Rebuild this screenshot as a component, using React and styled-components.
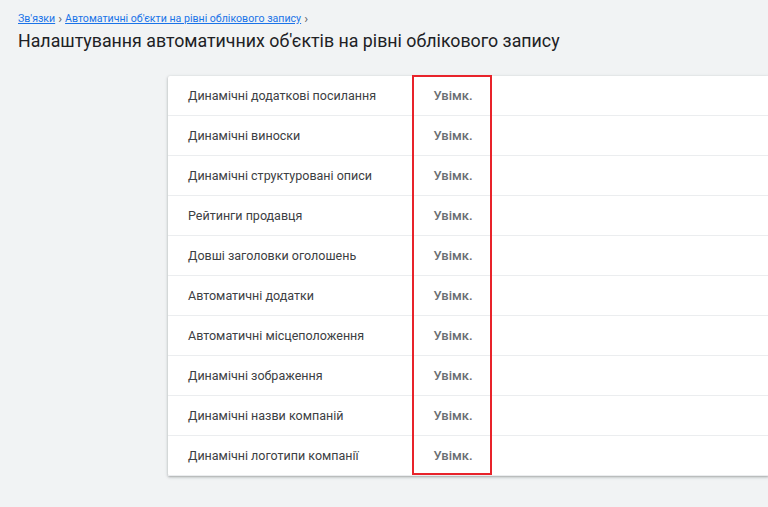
import React from "react"
import styled, { createGlobalStyle } from "styled-components"

const GlobalStyle = createGlobalStyle`
  html, body {
    margin: 0;
    padding: 0;
    background: #f1f3f4;
    font-family: Roboto, "Noto Sans", Arial, sans-serif;
    overflow: hidden;
  }
`

const settings = [
  "Динамічні додаткові посилання",
  "Динамічні виноски",
  "Динамічні структуровані описи",
  "Рейтинги продавця",
  "Довші заголовки оголошень",
  "Автоматичні додатки",
  "Автоматичні місцеположення",
  "Динамічні зображення",
  "Динамічні назви компаній",
  "Динамічні логотипи компанії",
]

const App = () => (
  <Page>
    <GlobalStyle />
    <Header>
      <Breadcrumbs>
        <Crumb href="#">Зв'язки</Crumb>
        <Chevron>›</Chevron>
        <Crumb href="#">Автоматичні об'єкти на рівні облікового запису</Crumb>
        <Chevron>›</Chevron>
      </Breadcrumbs>
      <Title>Налаштування автоматичних об'єктів на рівні облікового запису</Title>
    </Header>
    <Card>
      {settings.map(name => (
        <Row key={name}>
          <Label>{name}</Label>
          <Value>Увімк.</Value>
        </Row>
      ))}
      <Highlight />
    </Card>
  </Page>
)
export default App

const Page = styled.div`
  min-height: 507px;
  padding: 12px 0 0 18px;
  box-sizing: border-box;
`

const Header = styled.div`
  display: flex;
  flex-direction: column;
`

const Breadcrumbs = styled.div`
  display: flex;
  align-items: center;
  gap: 3px;
  font-size: 10.6px;
  line-height: 14px;
  color: #5f6368;
`

const Crumb = styled.a`
  color: #1a73e8;
  text-decoration: underline;
`

const Chevron = styled.span`
  font-size: 13px;
  color: #5f6368;
`

const Title = styled.h1`
  margin: 3px 0 0;
  font-size: 17.8px;
  font-weight: 400;
  line-height: 24px;
  color: #202124;
`

const Card = styled.div`
  position: relative;
  margin: 23px 0 0 150px;
  background: #fff;
  border-radius: 2px 0 0 2px;
  box-shadow: 0 1px 2px rgba(60, 64, 67, 0.3), 0 1px 3px 1px rgba(60, 64, 67, 0.12);
`

const Row = styled.div`
  display: flex;
  align-items: center;
  height: 40px;
  border-bottom: 1px solid #ebedef;
  box-sizing: border-box;
  &:last-of-type {
    border-bottom: none;
  }
`

const Label = styled.div`
  width: 225px;
  padding-left: 20px;
  font-size: 12.5px;
  color: #3c4043;
`

const Value = styled.div`
  width: 80px;
  text-align: center;
  font-size: 13px;
  font-weight: 500;
  color: #6a6e72;
`

const Highlight = styled.div`
  position: absolute;
  left: 244px;
  top: -1px;
  width: 80px;
  height: 400px;
  border: 2px solid #e8232a;
  box-sizing: border-box;
  pointer-events: none;
`
